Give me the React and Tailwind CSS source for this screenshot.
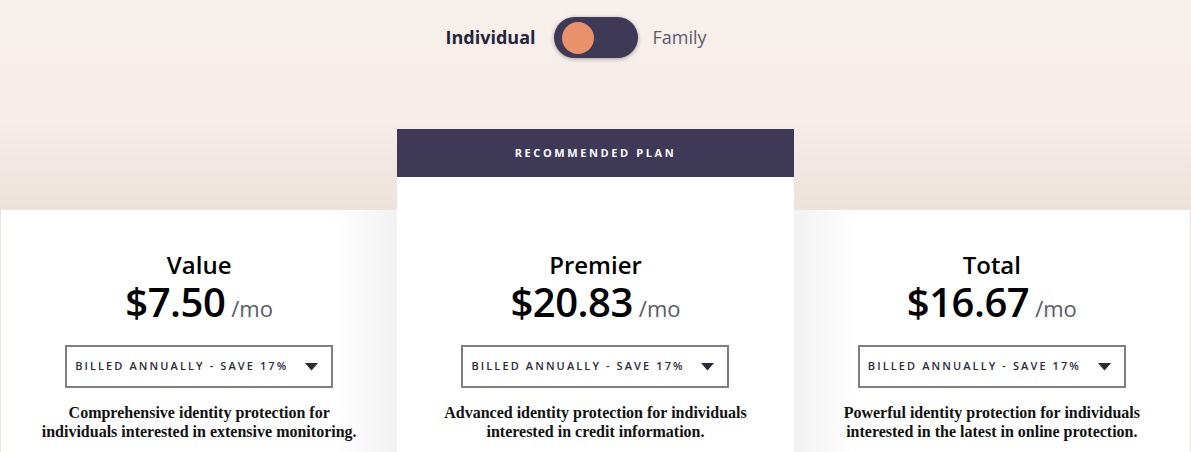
import React, { useState } from "react";

const plans = [
  {
    name: "Value",
    price: "$7.50",
    desc: ["Comprehensive identity protection for", "individuals interested in extensive monitoring."],
    side: "left",
  },
  {
    name: "Premier",
    price: "$20.83",
    desc: ["Advanced identity protection for individuals", "interested in credit information."],
    recommended: true,
  },
  {
    name: "Total",
    price: "$16.67",
    desc: ["Powerful identity protection for individuals", "interested in the latest in online protection."],
    side: "right",
  },
];

const PlanBody = ({ plan }) => (
  <div className="flex flex-col items-center">
    <h3 className="text-[24px] leading-[28px] font-semibold text-black">{plan.name}</h3>
    <div className="mt-[3px] flex items-baseline gap-[6px] leading-[40px]">
      <span className="text-[40px] font-semibold text-black tracking-[-0.5px]">{plan.price}</span>
      <span className="text-[22px] text-[#5b5b66]">/mo</span>
    </div>
    {/* billing select */}
    <button className="mt-[17px] w-[268px] h-[43px] border-2 border-[#7f7d8c] bg-white flex items-center justify-between pl-[8px] pr-[13px]">
      <span className="text-[11px] font-semibold tracking-[2.1px] text-[#2b2b3b]">
        BILLED ANNUALLY - SAVE 17%
      </span>
      <svg width="13" height="8" viewBox="0 0 13 8">
        <path d="M0 0 H13 L6.5 7.5 Z" fill="#2b2b33" />
      </svg>
    </button>
    <p className="mt-[15px] text-center font-['Liberation_Serif',serif] font-bold text-[16px] leading-[19px] text-[#111]">
      {plan.desc[0]}
      <br />
      {plan.desc[1]}
    </p>
  </div>
);

export default function App() {
  const [family, setFamily] = useState(false);

  return (
    <div className="h-[452px] overflow-hidden bg-[linear-gradient(to_bottom,#f8f0eb_0px,#f6ede8_120px,#ede2dc_210px)] font-['Open_Sans',sans-serif]">
      {/* toggle */}
      <div className="pt-[17px] grid grid-cols-[1fr_auto_1fr] items-center">
        <span className="justify-self-end text-[18px] font-bold text-[#23263a] mr-[18px]">Individual</span>
        <button
          onClick={() => setFamily(!family)}
          className={`w-[84px] h-[41px] rounded-full bg-[#3d3957] shadow-[0_1px_4px_rgba(0,0,0,0.35)] flex items-center px-[8px] ${
            family ? "justify-end" : "justify-start"
          }`}
        >
          <span className="w-[32px] h-[32px] rounded-full bg-[#e8916a]" />
        </button>
        <span className="justify-self-start text-[18px] text-[#5b5b6b] ml-[15px]">Family</span>
      </div>

      {/* plans */}
      <div className="mt-[71px] grid grid-cols-3 items-start px-px">
        {plans.map((plan) =>
          plan.recommended ? (
            <div key={plan.name} className="relative z-10 bg-white h-[400px]">
              <div className="h-[48px] bg-[#3d3957] flex items-center justify-center">
                <span className="text-[11px] font-bold tracking-[2.6px] text-white">RECOMMENDED PLAN</span>
              </div>
              <div className="pt-[74px]">
                <PlanBody plan={plan} />
              </div>
            </div>
          ) : (
            <div
              key={plan.name}
              className={`mt-[81px] h-[400px] pt-[41px] ${
                plan.side === "left"
                  ? "bg-[linear-gradient(to_right,#ffffff_84%,#f2f2f2)]"
                  : "bg-[linear-gradient(to_left,#ffffff_84%,#f2f2f2)]"
              }`}
            >
              <PlanBody plan={plan} />
            </div>
          )
        )}
      </div>
    </div>
  );
}
